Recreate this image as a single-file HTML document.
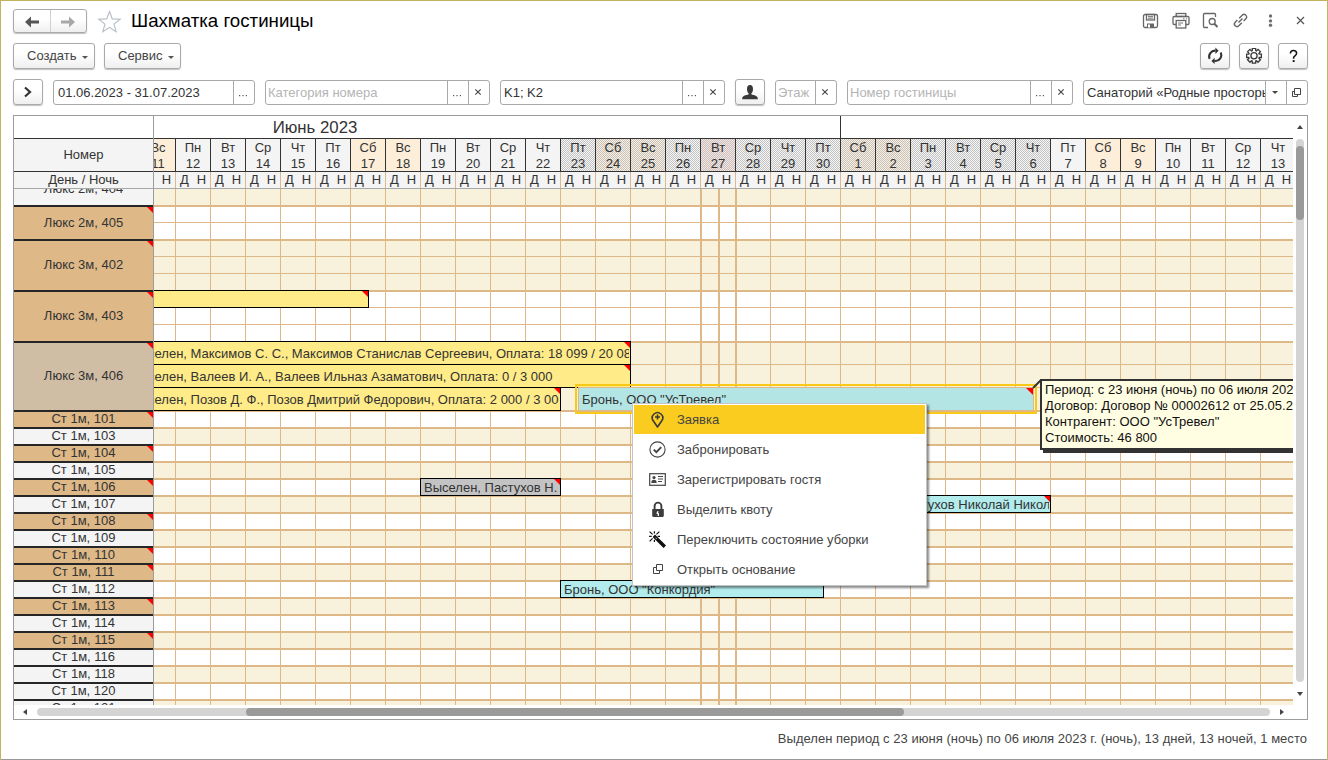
<!DOCTYPE html><html><head><meta charset="utf-8"><title>Шахматка гостиницы</title><style>
*{box-sizing:border-box;margin:0;padding:0}
html,body{width:1328px;height:760px;overflow:hidden;background:#fff;font-family:"Liberation Sans",sans-serif;font-size:13px;color:#333;position:relative}
.a{position:absolute}
.btn{position:absolute;border:1px solid #a9a9a9;border-radius:3px;background:linear-gradient(#fff 40%,#efefef);box-shadow:0 1px 1px rgba(0,0,0,.25)}
.fld{position:absolute;border:1px solid #a9a9a9;border-radius:3px;background:#fff;height:25px}
.sep{position:absolute;top:0;bottom:0;width:1px;background:#a9a9a9}
.t{position:absolute;white-space:nowrap;line-height:16px}
.ph{color:#b4b4b4}
.dots{position:absolute;font-size:11px;color:#444}
.x{position:absolute}
.hl{position:absolute;height:1px;background:#deb887}
.vl{position:absolute;width:1px;background:#deb887}
.chk{background-image:repeating-conic-gradient(#c2c2c2 0 25%,#f6f6f6 0 50%);background-size:2px 2px}
.chkw{background-image:repeating-conic-gradient(#c2c2c2 0 25%,#fdefd9 0 50%);background-size:2px 2px}
.chkt{background-image:repeating-conic-gradient(#c2c2c2 0 25%,#fde3de 0 50%);background-size:2px 2px}
.chkb{background-image:repeating-conic-gradient(#c2c2c2 0 25%,#deb887 0 50%);background-size:2px 2px}
.bar{position:absolute;border:1px solid #000;overflow:hidden;white-space:nowrap;line-height:16px}
.tri{position:absolute;width:0;height:0;border-top:6px solid #f00;border-left:6px solid transparent}
.mi{position:absolute;left:0;width:292px;height:30px}
.mi .t{left:44px;top:7px;color:#444}
</style></head><body>
<div class="a" style="left:0;top:0;width:1328px;height:1px;background:#c3b35e"></div>
<div class="a" style="left:0;top:0;width:1px;height:760px;background:#c3b35e"></div>
<div class="a" style="left:1327px;top:0;width:1px;height:760px;background:#c3b35e"></div>
<div class="a" style="left:1px;top:759px;width:1326px;height:1px;background:#999"></div>
<div class="btn" style="left:13px;top:9px;width:74px;height:24px"><div class="sep" style="left:36px;background:#d0d0d0"></div><svg class="a" style="left:10px;top:6px" width="16" height="12" viewBox="0 0 16 12"><path d="M1 6 L7 0.5 V4.6 H15 V7.4 H7 V11.5 Z" fill="#555"/></svg><svg class="a" style="left:46px;top:6px" width="16" height="12" viewBox="0 0 16 12"><path d="M15 6 L9 0.5 V4.6 H1 V7.4 H9 V11.5 Z" fill="#a8a8a8"/></svg></div>
<svg class="a" style="left:97px;top:10px" width="25" height="24" viewBox="0 0 25 24"><path d="M12.5 1.5 L15.3 8.9 L23.2 9.2 L17 14.1 L19.2 21.7 L12.5 17.4 L5.8 21.7 L8 14.1 L1.8 9.2 L9.7 8.9 Z" fill="none" stroke="#b5bcc4" stroke-width="1.1" stroke-linejoin="miter"/></svg>
<div class="t" style="left:131px;top:10px;font-size:18.7px;line-height:22px;color:#000">Шахматка гостиницы</div>
<svg class="a" style="left:1142px;top:13px" width="17" height="16" viewBox="0 0 17 16" fill="none" stroke="#666" stroke-width="1.3">
<rect x="1.5" y="1.5" width="14" height="13" rx="1.5"/><rect x="4.5" y="1.5" width="8" height="5.5"/><path d="M6 3.6 H11 M6 5.2 H11" stroke-width="0.9"/>
<rect x="5" y="10.5" width="7" height="4" fill="#666" stroke="none"/><rect x="6" y="11.5" width="2" height="3" fill="#fff" stroke="none"/></svg>
<svg class="a" style="left:1172px;top:12px" width="18" height="17" viewBox="0 0 18 17" fill="none" stroke="#666" stroke-width="1.3">
<rect x="4.2" y="1.5" width="9.6" height="3"/><path d="M4 12.5 H2.2 Q1 12.5 1 11.3 V5.7 Q1 4.5 2.2 4.5 H15.8 Q17 4.5 17 5.7 V11.3 Q17 12.5 15.8 12.5 H14"/>
<rect x="4.2" y="8.5" width="9.6" height="7.5" fill="#fff"/><path d="M6 11 H11 M6 13 H9 M11 6.8 H12.5 M14 6.8 H15" stroke-width="0.9"/></svg>
<svg class="a" style="left:1202px;top:12px" width="18" height="17" viewBox="0 0 18 17" fill="none" stroke="#666" stroke-width="1.3">
<path d="M6 15.5 H2.5 Q1.5 15.5 1.5 14.5 V2.5 Q1.5 1.5 2.5 1.5 H12.5 Q13.5 1.5 13.5 2.5 V5"/><circle cx="10.2" cy="9.5" r="3"/><path d="M12.3 11.8 L15.5 15" stroke-width="2"/></svg>
<svg class="a" style="left:1232px;top:12px" width="17" height="17" viewBox="0 0 17 17" fill="none" stroke="#666" stroke-width="1.4">
<path d="M7.2 6.2 L10.2 3.2 Q12 1.4 13.8 3.2 Q15.6 5 13.8 6.8 L11.6 9"/><path d="M9.8 10.8 L6.8 13.8 Q5 15.6 3.2 13.8 Q1.4 12 3.2 10.2 L5.4 8"/><path d="M6.5 10.5 L10.5 6.5"/></svg>
<svg class="a" style="left:1267px;top:12px" width="7" height="17" viewBox="0 0 7 17"><circle cx="3.5" cy="4" r="1.7" fill="#707070"/><circle cx="3.5" cy="8.9" r="1.7" fill="#707070"/><circle cx="3.5" cy="13.2" r="1.7" fill="#707070"/></svg>
<svg class="a" style="left:1295px;top:15px" width="11" height="11" viewBox="0 0 11 11"><path d="M2 2 L9 9 M9 2 L2 9" stroke="#555" stroke-width="1.2"/></svg>
<div class="btn" style="left:13px;top:43px;width:82px;height:26px"><div class="t" style="left:13px;top:4px;color:#444">Создать</div><div class="a" style="left:68px;top:12px;border-top:3px solid #555;border-left:3px solid transparent;border-right:3px solid transparent"></div></div>
<div class="btn" style="left:104px;top:43px;width:77px;height:26px"><div class="t" style="left:13px;top:4px;color:#444">Сервис</div><div class="a" style="left:63px;top:12px;border-top:3px solid #555;border-left:3px solid transparent;border-right:3px solid transparent"></div></div>
<div class="btn" style="left:1200px;top:43px;width:30px;height:26px"><svg class="a" style="left:6px;top:3px" width="16" height="18" viewBox="-1 -1 16 18" fill="none" stroke="#333" stroke-width="2.1">
<path d="M1.6 10.8 A5.9 5.9 0 0 1 7.6 2.7"/><path d="M12.6 4.4 A5.9 5.9 0 0 1 6.4 12.9"/><path d="M7.4 -0.4 L10.6 2.7 L7.4 5.9 Z M6.6 9.8 L3.4 12.9 L6.6 16 Z" fill="#333" stroke="none"/></svg></div>
<div class="btn" style="left:1239px;top:43px;width:30px;height:26px"><svg class="a" style="left:6px;top:4px" width="17" height="17" viewBox="0 0 17 17" fill="none" stroke="#3a3a3a" stroke-width="1.3">
<path d="M6.30 2.57 L6.30 0.40 L9.70 0.40 L9.70 2.57 L10.50 2.90 L12.03 1.37 L14.43 3.77 L12.90 5.30 L13.23 6.10 L15.40 6.10 L15.40 9.50 L13.23 9.50 L12.90 10.30 L14.43 11.83 L12.03 14.23 L10.50 12.70 L9.70 13.03 L9.70 15.20 L6.30 15.20 L6.30 13.03 L5.50 12.70 L3.97 14.23 L1.57 11.83 L3.10 10.30 L2.77 9.50 L0.60 9.50 L0.60 6.10 L2.77 6.10 L3.10 5.30 L1.57 3.77 L3.97 1.37 L5.50 2.90 Z" stroke-linejoin="miter"/><circle cx="8.0" cy="7.8" r="3.1"/></svg></div>
<div class="btn" style="left:1278px;top:43px;width:30px;height:26px"><svg class="a" style="left:9px;top:5px" width="11" height="14" viewBox="0 0 11 14"><path d="M2.4 4.6 C2.4 2.6 3.6 1.5 5.5 1.5 C7.4 1.5 8.6 2.7 8.6 4.3 C8.6 6.3 6.4 6.8 5.6 8.3 V9.8" fill="none" stroke="#111" stroke-width="1.5"/><rect x="4.7" y="11.1" width="1.9" height="1.9" fill="#111"/></svg></div>
<div class="btn" style="left:13px;top:79px;width:30px;height:26px"><svg class="a" style="left:9px;top:6px" width="10" height="12" viewBox="0 0 10 12"><path d="M2 1.5 L7 6 L2 10.5" fill="none" stroke="#333" stroke-width="2.2"/></svg></div>
<div class="fld" style="left:53px;top:80px;width:202px"><div class="t " style="left:4px;top:4px">01.06.2023 - 31.07.2023</div><div class="sep" style="left:179px"></div><svg class="a" style="left:184px;top:13px" width="10" height="3" viewBox="0 0 10 3"><rect x="1" y="1" width="1.2" height="1.2" fill="#555"/><rect x="4.4" y="1" width="1.2" height="1.2" fill="#555"/><rect x="7.8" y="1" width="1.2" height="1.2" fill="#555"/></svg></div>
<div class="fld" style="left:265px;top:80px;width:225px"><div class="t ph" style="left:2px;top:4px">Категория номера</div><div class="sep" style="left:202px"></div><svg class="a" style="left:208px;top:7px" width="8" height="8" viewBox="0 0 8 8"><path d="M1.3 1.3 L6.7 6.7 M6.7 1.3 L1.3 6.7" stroke="#444" stroke-width="1.1"/></svg><div class="sep" style="left:181px"></div><svg class="a" style="left:186px;top:13px" width="10" height="3" viewBox="0 0 10 3"><rect x="1" y="1" width="1.2" height="1.2" fill="#555"/><rect x="4.4" y="1" width="1.2" height="1.2" fill="#555"/><rect x="7.8" y="1" width="1.2" height="1.2" fill="#555"/></svg></div>
<div class="fld" style="left:500px;top:80px;width:225px"><div class="t " style="left:3px;top:4px">K1; K2</div><div class="sep" style="left:202px"></div><svg class="a" style="left:208px;top:7px" width="8" height="8" viewBox="0 0 8 8"><path d="M1.3 1.3 L6.7 6.7 M6.7 1.3 L1.3 6.7" stroke="#444" stroke-width="1.1"/></svg><div class="sep" style="left:181px"></div><svg class="a" style="left:186px;top:13px" width="10" height="3" viewBox="0 0 10 3"><rect x="1" y="1" width="1.2" height="1.2" fill="#555"/><rect x="4.4" y="1" width="1.2" height="1.2" fill="#555"/><rect x="7.8" y="1" width="1.2" height="1.2" fill="#555"/></svg></div>
<div class="btn" style="left:735px;top:79px;width:30px;height:26px"><svg class="a" style="left:6px;top:5px" width="18" height="15" viewBox="0 0 18 15"><path d="M8 0 C5.6 0 5 2 5 4.2 C5 6.2 5.8 7.6 6.6 8.3 V9.3 C6.6 9.9 0.2 10.3 0.2 13.2 V14.2 H15.8 V13.2 C15.8 10.3 9.4 9.9 9.4 9.3 V8.3 C10.2 7.6 11 6.2 11 4.2 C11 2 10.4 0 8 0 Z" fill="#3a3a3a"/></svg></div>
<div class="fld" style="left:775px;top:80px;width:62px"><div class="t ph" style="left:2px;top:4px">Этаж</div><div class="sep" style="left:39px"></div><svg class="a" style="left:45px;top:7px" width="8" height="8" viewBox="0 0 8 8"><path d="M1.3 1.3 L6.7 6.7 M6.7 1.3 L1.3 6.7" stroke="#444" stroke-width="1.1"/></svg></div>
<div class="fld" style="left:847px;top:80px;width:226px"><div class="t ph" style="left:2px;top:4px">Номер гостиницы</div><div class="sep" style="left:203px"></div><svg class="a" style="left:209px;top:7px" width="8" height="8" viewBox="0 0 8 8"><path d="M1.3 1.3 L6.7 6.7 M6.7 1.3 L1.3 6.7" stroke="#444" stroke-width="1.1"/></svg><div class="sep" style="left:182px"></div><svg class="a" style="left:187px;top:13px" width="10" height="3" viewBox="0 0 10 3"><rect x="1" y="1" width="1.2" height="1.2" fill="#555"/><rect x="4.4" y="1" width="1.2" height="1.2" fill="#555"/><rect x="7.8" y="1" width="1.2" height="1.2" fill="#555"/></svg></div>
<div class="fld" style="left:1083px;top:80px;width:225px;overflow:hidden"><div class="t" style="left:3px;top:4px;width:178px;overflow:hidden">Санаторий «Родные просторы»</div><div class="sep" style="left:181px"></div><div class="a" style="left:188px;top:10px;border-top:3px solid #444;border-left:3px solid transparent;border-right:3px solid transparent"></div><div class="sep" style="left:202px"></div><svg class="a" style="left:207px;top:6px" width="11" height="11" viewBox="0 0 11 11" fill="none" stroke="#444" stroke-width="1"><path d="M3.5 1.5 H9.5 V7.5 H3.5 Z"/><path d="M3.5 4.5 H1.5 V9.5 H6.5 V7.5"/></svg></div>
<div class="a" style="left:13px;top:115px;width:1295px;height:605px;border:1px solid #9c9c9c"></div>
<div class="a" style="left:14px;top:139px;width:139px;height:49px;background:#f4f4f4"></div>
<div class="a" style="left:14px;top:138px;width:1279px;height:1px;background:#333"></div>
<div class="a" style="left:14px;top:171px;width:1279px;height:1px;background:#333"></div>
<div class="t" style="left:14px;top:147px;width:139px;text-align:center">Номер</div>
<div class="t" style="left:14px;top:172px;width:139px;text-align:center">День / Ночь</div>
<div class="a" style="left:153px;top:116px;width:1px;height:589px;background:#9c9c9c"></div>
<div class="a" style="left:154px;top:116px;width:1139px;height:72px;overflow:hidden">
<div class="t" style="left:61px;top:3px;width:200px;text-align:center;font-size:16.8px;line-height:18px">Июнь 2023</div>
<div class="a" style="left:686px;top:0;width:1px;height:22px;background:#333"></div>
<div class="a " style="left:-13px;top:23px;width:34px;height:32px;background:#fdeed9;"></div>
<div class="t" style="left:-14px;top:24px;width:36px;text-align:center">Вс<br>11</div>
<div class="a" style="left:-14px;top:22px;width:1px;height:34px;background:#333"></div>
<div class="a" style="left:-13px;top:56px;width:34px;height:16px;background:#f4f4f4"></div>
<div class="t" style="left:-13px;top:56px;width:17px;text-align:center">Д</div>
<div class="t" style="left:4px;top:56px;width:17px;text-align:center">Н</div>
<div class="a" style="left:-14px;top:56px;width:1px;height:16px;background:#deb887"></div>
<div class="a " style="left:22px;top:23px;width:34px;height:32px;background:#f4f4f4;"></div>
<div class="t" style="left:21px;top:24px;width:36px;text-align:center">Пн<br>12</div>
<div class="a" style="left:21px;top:22px;width:1px;height:34px;background:#333"></div>
<div class="a" style="left:22px;top:56px;width:34px;height:16px;background:#f4f4f4"></div>
<div class="t" style="left:22px;top:56px;width:17px;text-align:center">Д</div>
<div class="t" style="left:39px;top:56px;width:17px;text-align:center">Н</div>
<div class="a" style="left:21px;top:56px;width:1px;height:16px;background:#deb887"></div>
<div class="a " style="left:57px;top:23px;width:34px;height:32px;background:#f4f4f4;"></div>
<div class="t" style="left:56px;top:24px;width:36px;text-align:center">Вт<br>13</div>
<div class="a" style="left:56px;top:22px;width:1px;height:34px;background:#333"></div>
<div class="a" style="left:57px;top:56px;width:34px;height:16px;background:#f4f4f4"></div>
<div class="t" style="left:57px;top:56px;width:17px;text-align:center">Д</div>
<div class="t" style="left:74px;top:56px;width:17px;text-align:center">Н</div>
<div class="a" style="left:56px;top:56px;width:1px;height:16px;background:#deb887"></div>
<div class="a " style="left:92px;top:23px;width:34px;height:32px;background:#f4f4f4;"></div>
<div class="t" style="left:91px;top:24px;width:36px;text-align:center">Ср<br>14</div>
<div class="a" style="left:91px;top:22px;width:1px;height:34px;background:#333"></div>
<div class="a" style="left:92px;top:56px;width:34px;height:16px;background:#f4f4f4"></div>
<div class="t" style="left:92px;top:56px;width:17px;text-align:center">Д</div>
<div class="t" style="left:109px;top:56px;width:17px;text-align:center">Н</div>
<div class="a" style="left:91px;top:56px;width:1px;height:16px;background:#deb887"></div>
<div class="a " style="left:127px;top:23px;width:34px;height:32px;background:#f4f4f4;"></div>
<div class="t" style="left:126px;top:24px;width:36px;text-align:center">Чт<br>15</div>
<div class="a" style="left:126px;top:22px;width:1px;height:34px;background:#333"></div>
<div class="a" style="left:127px;top:56px;width:34px;height:16px;background:#f4f4f4"></div>
<div class="t" style="left:127px;top:56px;width:17px;text-align:center">Д</div>
<div class="t" style="left:144px;top:56px;width:17px;text-align:center">Н</div>
<div class="a" style="left:126px;top:56px;width:1px;height:16px;background:#deb887"></div>
<div class="a " style="left:162px;top:23px;width:34px;height:32px;background:#f4f4f4;"></div>
<div class="t" style="left:161px;top:24px;width:36px;text-align:center">Пт<br>16</div>
<div class="a" style="left:161px;top:22px;width:1px;height:34px;background:#333"></div>
<div class="a" style="left:162px;top:56px;width:34px;height:16px;background:#f4f4f4"></div>
<div class="t" style="left:162px;top:56px;width:17px;text-align:center">Д</div>
<div class="t" style="left:179px;top:56px;width:17px;text-align:center">Н</div>
<div class="a" style="left:161px;top:56px;width:1px;height:16px;background:#deb887"></div>
<div class="a " style="left:197px;top:23px;width:34px;height:32px;background:#fdeed9;"></div>
<div class="t" style="left:196px;top:24px;width:36px;text-align:center">Сб<br>17</div>
<div class="a" style="left:196px;top:22px;width:1px;height:34px;background:#333"></div>
<div class="a" style="left:197px;top:56px;width:34px;height:16px;background:#f4f4f4"></div>
<div class="t" style="left:197px;top:56px;width:17px;text-align:center">Д</div>
<div class="t" style="left:214px;top:56px;width:17px;text-align:center">Н</div>
<div class="a" style="left:196px;top:56px;width:1px;height:16px;background:#deb887"></div>
<div class="a " style="left:232px;top:23px;width:34px;height:32px;background:#fdeed9;"></div>
<div class="t" style="left:231px;top:24px;width:36px;text-align:center">Вс<br>18</div>
<div class="a" style="left:231px;top:22px;width:1px;height:34px;background:#333"></div>
<div class="a" style="left:232px;top:56px;width:34px;height:16px;background:#f4f4f4"></div>
<div class="t" style="left:232px;top:56px;width:17px;text-align:center">Д</div>
<div class="t" style="left:249px;top:56px;width:17px;text-align:center">Н</div>
<div class="a" style="left:231px;top:56px;width:1px;height:16px;background:#deb887"></div>
<div class="a " style="left:267px;top:23px;width:34px;height:32px;background:#f4f4f4;"></div>
<div class="t" style="left:266px;top:24px;width:36px;text-align:center">Пн<br>19</div>
<div class="a" style="left:266px;top:22px;width:1px;height:34px;background:#333"></div>
<div class="a" style="left:267px;top:56px;width:34px;height:16px;background:#f4f4f4"></div>
<div class="t" style="left:267px;top:56px;width:17px;text-align:center">Д</div>
<div class="t" style="left:284px;top:56px;width:17px;text-align:center">Н</div>
<div class="a" style="left:266px;top:56px;width:1px;height:16px;background:#deb887"></div>
<div class="a " style="left:302px;top:23px;width:34px;height:32px;background:#f4f4f4;"></div>
<div class="t" style="left:301px;top:24px;width:36px;text-align:center">Вт<br>20</div>
<div class="a" style="left:301px;top:22px;width:1px;height:34px;background:#333"></div>
<div class="a" style="left:302px;top:56px;width:34px;height:16px;background:#f4f4f4"></div>
<div class="t" style="left:302px;top:56px;width:17px;text-align:center">Д</div>
<div class="t" style="left:319px;top:56px;width:17px;text-align:center">Н</div>
<div class="a" style="left:301px;top:56px;width:1px;height:16px;background:#deb887"></div>
<div class="a " style="left:337px;top:23px;width:34px;height:32px;background:#f4f4f4;"></div>
<div class="t" style="left:336px;top:24px;width:36px;text-align:center">Ср<br>21</div>
<div class="a" style="left:336px;top:22px;width:1px;height:34px;background:#333"></div>
<div class="a" style="left:337px;top:56px;width:34px;height:16px;background:#f4f4f4"></div>
<div class="t" style="left:337px;top:56px;width:17px;text-align:center">Д</div>
<div class="t" style="left:354px;top:56px;width:17px;text-align:center">Н</div>
<div class="a" style="left:336px;top:56px;width:1px;height:16px;background:#deb887"></div>
<div class="a " style="left:372px;top:23px;width:34px;height:32px;background:#f4f4f4;"></div>
<div class="t" style="left:371px;top:24px;width:36px;text-align:center">Чт<br>22</div>
<div class="a" style="left:371px;top:22px;width:1px;height:34px;background:#333"></div>
<div class="a" style="left:372px;top:56px;width:34px;height:16px;background:#f4f4f4"></div>
<div class="t" style="left:372px;top:56px;width:17px;text-align:center">Д</div>
<div class="t" style="left:389px;top:56px;width:17px;text-align:center">Н</div>
<div class="a" style="left:371px;top:56px;width:1px;height:16px;background:#deb887"></div>
<div class="a chk" style="left:407px;top:23px;width:34px;height:32px;"></div>
<div class="t" style="left:406px;top:24px;width:36px;text-align:center">Пт<br>23</div>
<div class="a" style="left:406px;top:22px;width:1px;height:34px;background:#333"></div>
<div class="a" style="left:407px;top:56px;width:34px;height:16px;background:#f4f4f4"></div>
<div class="t" style="left:407px;top:56px;width:17px;text-align:center">Д</div>
<div class="t" style="left:424px;top:56px;width:17px;text-align:center">Н</div>
<div class="a" style="left:406px;top:56px;width:1px;height:16px;background:#deb887"></div>
<div class="a chkw" style="left:442px;top:23px;width:34px;height:32px;"></div>
<div class="t" style="left:441px;top:24px;width:36px;text-align:center">Сб<br>24</div>
<div class="a" style="left:441px;top:22px;width:1px;height:34px;background:#333"></div>
<div class="a" style="left:442px;top:56px;width:34px;height:16px;background:#f4f4f4"></div>
<div class="t" style="left:442px;top:56px;width:17px;text-align:center">Д</div>
<div class="t" style="left:459px;top:56px;width:17px;text-align:center">Н</div>
<div class="a" style="left:441px;top:56px;width:1px;height:16px;background:#deb887"></div>
<div class="a chkw" style="left:477px;top:23px;width:34px;height:32px;"></div>
<div class="t" style="left:476px;top:24px;width:36px;text-align:center">Вс<br>25</div>
<div class="a" style="left:476px;top:22px;width:1px;height:34px;background:#333"></div>
<div class="a" style="left:477px;top:56px;width:34px;height:16px;background:#f4f4f4"></div>
<div class="t" style="left:477px;top:56px;width:17px;text-align:center">Д</div>
<div class="t" style="left:494px;top:56px;width:17px;text-align:center">Н</div>
<div class="a" style="left:476px;top:56px;width:1px;height:16px;background:#deb887"></div>
<div class="a chk" style="left:512px;top:23px;width:34px;height:32px;"></div>
<div class="t" style="left:511px;top:24px;width:36px;text-align:center">Пн<br>26</div>
<div class="a" style="left:511px;top:22px;width:1px;height:34px;background:#333"></div>
<div class="a" style="left:512px;top:56px;width:34px;height:16px;background:#f4f4f4"></div>
<div class="t" style="left:512px;top:56px;width:17px;text-align:center">Д</div>
<div class="t" style="left:529px;top:56px;width:17px;text-align:center">Н</div>
<div class="a" style="left:511px;top:56px;width:1px;height:16px;background:#deb887"></div>
<div class="a chkt" style="left:547px;top:23px;width:34px;height:32px;"></div>
<div class="t" style="left:546px;top:24px;width:36px;text-align:center">Вт<br>27</div>
<div class="a" style="left:546px;top:22px;width:1px;height:34px;background:#333"></div>
<div class="a" style="left:547px;top:56px;width:34px;height:16px;background:#f4f4f4"></div>
<div class="t" style="left:547px;top:56px;width:17px;text-align:center">Д</div>
<div class="t" style="left:564px;top:56px;width:17px;text-align:center">Н</div>
<div class="a" style="left:546px;top:56px;width:1px;height:16px;background:#deb887"></div>
<div class="a chk" style="left:582px;top:23px;width:34px;height:32px;"></div>
<div class="t" style="left:581px;top:24px;width:36px;text-align:center">Ср<br>28</div>
<div class="a" style="left:581px;top:22px;width:1px;height:34px;background:#333"></div>
<div class="a" style="left:582px;top:56px;width:34px;height:16px;background:#f4f4f4"></div>
<div class="t" style="left:582px;top:56px;width:17px;text-align:center">Д</div>
<div class="t" style="left:599px;top:56px;width:17px;text-align:center">Н</div>
<div class="a" style="left:581px;top:56px;width:1px;height:16px;background:#deb887"></div>
<div class="a chk" style="left:617px;top:23px;width:34px;height:32px;"></div>
<div class="t" style="left:616px;top:24px;width:36px;text-align:center">Чт<br>29</div>
<div class="a" style="left:616px;top:22px;width:1px;height:34px;background:#333"></div>
<div class="a" style="left:617px;top:56px;width:34px;height:16px;background:#f4f4f4"></div>
<div class="t" style="left:617px;top:56px;width:17px;text-align:center">Д</div>
<div class="t" style="left:634px;top:56px;width:17px;text-align:center">Н</div>
<div class="a" style="left:616px;top:56px;width:1px;height:16px;background:#deb887"></div>
<div class="a chk" style="left:652px;top:23px;width:34px;height:32px;"></div>
<div class="t" style="left:651px;top:24px;width:36px;text-align:center">Пт<br>30</div>
<div class="a" style="left:651px;top:22px;width:1px;height:34px;background:#333"></div>
<div class="a" style="left:652px;top:56px;width:34px;height:16px;background:#f4f4f4"></div>
<div class="t" style="left:652px;top:56px;width:17px;text-align:center">Д</div>
<div class="t" style="left:669px;top:56px;width:17px;text-align:center">Н</div>
<div class="a" style="left:651px;top:56px;width:1px;height:16px;background:#deb887"></div>
<div class="a chkw" style="left:687px;top:23px;width:34px;height:32px;"></div>
<div class="t" style="left:686px;top:24px;width:36px;text-align:center">Сб<br>1</div>
<div class="a" style="left:686px;top:22px;width:1px;height:34px;background:#333"></div>
<div class="a" style="left:687px;top:56px;width:34px;height:16px;background:#f4f4f4"></div>
<div class="t" style="left:687px;top:56px;width:17px;text-align:center">Д</div>
<div class="t" style="left:704px;top:56px;width:17px;text-align:center">Н</div>
<div class="a" style="left:686px;top:56px;width:1px;height:16px;background:#deb887"></div>
<div class="a chkw" style="left:722px;top:23px;width:34px;height:32px;"></div>
<div class="t" style="left:721px;top:24px;width:36px;text-align:center">Вс<br>2</div>
<div class="a" style="left:721px;top:22px;width:1px;height:34px;background:#333"></div>
<div class="a" style="left:722px;top:56px;width:34px;height:16px;background:#f4f4f4"></div>
<div class="t" style="left:722px;top:56px;width:17px;text-align:center">Д</div>
<div class="t" style="left:739px;top:56px;width:17px;text-align:center">Н</div>
<div class="a" style="left:721px;top:56px;width:1px;height:16px;background:#deb887"></div>
<div class="a chk" style="left:757px;top:23px;width:34px;height:32px;"></div>
<div class="t" style="left:756px;top:24px;width:36px;text-align:center">Пн<br>3</div>
<div class="a" style="left:756px;top:22px;width:1px;height:34px;background:#333"></div>
<div class="a" style="left:757px;top:56px;width:34px;height:16px;background:#f4f4f4"></div>
<div class="t" style="left:757px;top:56px;width:17px;text-align:center">Д</div>
<div class="t" style="left:774px;top:56px;width:17px;text-align:center">Н</div>
<div class="a" style="left:756px;top:56px;width:1px;height:16px;background:#deb887"></div>
<div class="a chk" style="left:792px;top:23px;width:34px;height:32px;"></div>
<div class="t" style="left:791px;top:24px;width:36px;text-align:center">Вт<br>4</div>
<div class="a" style="left:791px;top:22px;width:1px;height:34px;background:#333"></div>
<div class="a" style="left:792px;top:56px;width:34px;height:16px;background:#f4f4f4"></div>
<div class="t" style="left:792px;top:56px;width:17px;text-align:center">Д</div>
<div class="t" style="left:809px;top:56px;width:17px;text-align:center">Н</div>
<div class="a" style="left:791px;top:56px;width:1px;height:16px;background:#deb887"></div>
<div class="a chk" style="left:827px;top:23px;width:34px;height:32px;"></div>
<div class="t" style="left:826px;top:24px;width:36px;text-align:center">Ср<br>5</div>
<div class="a" style="left:826px;top:22px;width:1px;height:34px;background:#333"></div>
<div class="a" style="left:827px;top:56px;width:34px;height:16px;background:#f4f4f4"></div>
<div class="t" style="left:827px;top:56px;width:17px;text-align:center">Д</div>
<div class="t" style="left:844px;top:56px;width:17px;text-align:center">Н</div>
<div class="a" style="left:826px;top:56px;width:1px;height:16px;background:#deb887"></div>
<div class="a chk" style="left:862px;top:23px;width:34px;height:32px;"></div>
<div class="t" style="left:861px;top:24px;width:36px;text-align:center">Чт<br>6</div>
<div class="a" style="left:861px;top:22px;width:1px;height:34px;background:#333"></div>
<div class="a" style="left:862px;top:56px;width:34px;height:16px;background:#f4f4f4"></div>
<div class="t" style="left:862px;top:56px;width:17px;text-align:center">Д</div>
<div class="t" style="left:879px;top:56px;width:17px;text-align:center">Н</div>
<div class="a" style="left:861px;top:56px;width:1px;height:16px;background:#deb887"></div>
<div class="a " style="left:897px;top:23px;width:34px;height:32px;background:#f4f4f4;"></div>
<div class="t" style="left:896px;top:24px;width:36px;text-align:center">Пт<br>7</div>
<div class="a" style="left:896px;top:22px;width:1px;height:34px;background:#333"></div>
<div class="a" style="left:897px;top:56px;width:34px;height:16px;background:#f4f4f4"></div>
<div class="t" style="left:897px;top:56px;width:17px;text-align:center">Д</div>
<div class="t" style="left:914px;top:56px;width:17px;text-align:center">Н</div>
<div class="a" style="left:896px;top:56px;width:1px;height:16px;background:#deb887"></div>
<div class="a " style="left:932px;top:23px;width:34px;height:32px;background:#fdeed9;"></div>
<div class="t" style="left:931px;top:24px;width:36px;text-align:center">Сб<br>8</div>
<div class="a" style="left:931px;top:22px;width:1px;height:34px;background:#333"></div>
<div class="a" style="left:932px;top:56px;width:34px;height:16px;background:#f4f4f4"></div>
<div class="t" style="left:932px;top:56px;width:17px;text-align:center">Д</div>
<div class="t" style="left:949px;top:56px;width:17px;text-align:center">Н</div>
<div class="a" style="left:931px;top:56px;width:1px;height:16px;background:#deb887"></div>
<div class="a " style="left:967px;top:23px;width:34px;height:32px;background:#fdeed9;"></div>
<div class="t" style="left:966px;top:24px;width:36px;text-align:center">Вс<br>9</div>
<div class="a" style="left:966px;top:22px;width:1px;height:34px;background:#333"></div>
<div class="a" style="left:967px;top:56px;width:34px;height:16px;background:#f4f4f4"></div>
<div class="t" style="left:967px;top:56px;width:17px;text-align:center">Д</div>
<div class="t" style="left:984px;top:56px;width:17px;text-align:center">Н</div>
<div class="a" style="left:966px;top:56px;width:1px;height:16px;background:#deb887"></div>
<div class="a " style="left:1002px;top:23px;width:34px;height:32px;background:#f4f4f4;"></div>
<div class="t" style="left:1001px;top:24px;width:36px;text-align:center">Пн<br>10</div>
<div class="a" style="left:1001px;top:22px;width:1px;height:34px;background:#333"></div>
<div class="a" style="left:1002px;top:56px;width:34px;height:16px;background:#f4f4f4"></div>
<div class="t" style="left:1002px;top:56px;width:17px;text-align:center">Д</div>
<div class="t" style="left:1019px;top:56px;width:17px;text-align:center">Н</div>
<div class="a" style="left:1001px;top:56px;width:1px;height:16px;background:#deb887"></div>
<div class="a " style="left:1037px;top:23px;width:34px;height:32px;background:#f4f4f4;"></div>
<div class="t" style="left:1036px;top:24px;width:36px;text-align:center">Вт<br>11</div>
<div class="a" style="left:1036px;top:22px;width:1px;height:34px;background:#333"></div>
<div class="a" style="left:1037px;top:56px;width:34px;height:16px;background:#f4f4f4"></div>
<div class="t" style="left:1037px;top:56px;width:17px;text-align:center">Д</div>
<div class="t" style="left:1054px;top:56px;width:17px;text-align:center">Н</div>
<div class="a" style="left:1036px;top:56px;width:1px;height:16px;background:#deb887"></div>
<div class="a " style="left:1072px;top:23px;width:34px;height:32px;background:#f4f4f4;"></div>
<div class="t" style="left:1071px;top:24px;width:36px;text-align:center">Ср<br>12</div>
<div class="a" style="left:1071px;top:22px;width:1px;height:34px;background:#333"></div>
<div class="a" style="left:1072px;top:56px;width:34px;height:16px;background:#f4f4f4"></div>
<div class="t" style="left:1072px;top:56px;width:17px;text-align:center">Д</div>
<div class="t" style="left:1089px;top:56px;width:17px;text-align:center">Н</div>
<div class="a" style="left:1071px;top:56px;width:1px;height:16px;background:#deb887"></div>
<div class="a " style="left:1107px;top:23px;width:34px;height:32px;background:#f4f4f4;"></div>
<div class="t" style="left:1106px;top:24px;width:36px;text-align:center">Чт<br>13</div>
<div class="a" style="left:1106px;top:22px;width:1px;height:34px;background:#333"></div>
<div class="a" style="left:1107px;top:56px;width:34px;height:16px;background:#f4f4f4"></div>
<div class="t" style="left:1107px;top:56px;width:17px;text-align:center">Д</div>
<div class="t" style="left:1124px;top:56px;width:17px;text-align:center">Н</div>
<div class="a" style="left:1106px;top:56px;width:1px;height:16px;background:#deb887"></div>
</div>
<div class="a" style="left:14px;top:188px;width:1279px;height:1px;background:#a8a8a8"></div>
<div class="a" style="left:14px;top:189px;width:139px;height:516px;overflow:hidden">
<div class="a " style="left:0;top:-18px;width:139px;height:34px;background:#f4f4f4;"></div>
<div class="a" style="left:0;top:-18px;width:139px;height:2px;background:#262626"></div>
<div class="t" style="left:0;top:-8px;width:139px;text-align:center">Люкс 2м, 404</div>
<div class="a " style="left:0;top:16px;width:139px;height:34px;background:#deb887;"></div>
<div class="a" style="left:0;top:16px;width:139px;height:2px;background:#262626"></div>
<div class="tri" style="left:133px;top:18px"></div>
<div class="t" style="left:0;top:26px;width:139px;text-align:center">Люкс 2м, 405</div>
<div class="a " style="left:0;top:50px;width:139px;height:51px;background:#deb887;"></div>
<div class="a" style="left:0;top:50px;width:139px;height:2px;background:#262626"></div>
<div class="tri" style="left:133px;top:52px"></div>
<div class="t" style="left:0;top:68px;width:139px;text-align:center">Люкс 3м, 402</div>
<div class="a " style="left:0;top:101px;width:139px;height:51px;background:#deb887;"></div>
<div class="a" style="left:0;top:101px;width:139px;height:2px;background:#262626"></div>
<div class="tri" style="left:133px;top:103px"></div>
<div class="t" style="left:0;top:119px;width:139px;text-align:center">Люкс 3м, 403</div>
<div class="a chkb" style="left:0;top:152px;width:139px;height:69px;"></div>
<div class="a" style="left:0;top:152px;width:139px;height:2px;background:#262626"></div>
<div class="tri" style="left:133px;top:154px"></div>
<div class="t" style="left:0;top:179px;width:139px;text-align:center">Люкс 3м, 406</div>
<div class="a " style="left:0;top:221px;width:139px;height:17px;background:#deb887;"></div>
<div class="a" style="left:0;top:221px;width:139px;height:2px;background:#262626"></div>
<div class="tri" style="left:133px;top:223px"></div>
<div class="t" style="left:0;top:222px;width:139px;text-align:center">Ст 1м, 101</div>
<div class="a " style="left:0;top:238px;width:139px;height:17px;background:#f4f4f4;"></div>
<div class="a" style="left:0;top:238px;width:139px;height:2px;background:#262626"></div>
<div class="t" style="left:0;top:239px;width:139px;text-align:center">Ст 1м, 103</div>
<div class="a " style="left:0;top:255px;width:139px;height:17px;background:#deb887;"></div>
<div class="a" style="left:0;top:255px;width:139px;height:2px;background:#262626"></div>
<div class="tri" style="left:133px;top:257px"></div>
<div class="t" style="left:0;top:256px;width:139px;text-align:center">Ст 1м, 104</div>
<div class="a " style="left:0;top:272px;width:139px;height:17px;background:#f4f4f4;"></div>
<div class="a" style="left:0;top:272px;width:139px;height:2px;background:#262626"></div>
<div class="t" style="left:0;top:273px;width:139px;text-align:center">Ст 1м, 105</div>
<div class="a " style="left:0;top:289px;width:139px;height:17px;background:#deb887;"></div>
<div class="a" style="left:0;top:289px;width:139px;height:2px;background:#262626"></div>
<div class="tri" style="left:133px;top:291px"></div>
<div class="t" style="left:0;top:290px;width:139px;text-align:center">Ст 1м, 106</div>
<div class="a " style="left:0;top:306px;width:139px;height:17px;background:#f4f4f4;"></div>
<div class="a" style="left:0;top:306px;width:139px;height:2px;background:#262626"></div>
<div class="t" style="left:0;top:307px;width:139px;text-align:center">Ст 1м, 107</div>
<div class="a " style="left:0;top:323px;width:139px;height:17px;background:#deb887;"></div>
<div class="a" style="left:0;top:323px;width:139px;height:2px;background:#262626"></div>
<div class="tri" style="left:133px;top:325px"></div>
<div class="t" style="left:0;top:324px;width:139px;text-align:center">Ст 1м, 108</div>
<div class="a " style="left:0;top:340px;width:139px;height:17px;background:#f4f4f4;"></div>
<div class="a" style="left:0;top:340px;width:139px;height:2px;background:#262626"></div>
<div class="t" style="left:0;top:341px;width:139px;text-align:center">Ст 1м, 109</div>
<div class="a " style="left:0;top:357px;width:139px;height:17px;background:#deb887;"></div>
<div class="a" style="left:0;top:357px;width:139px;height:2px;background:#262626"></div>
<div class="tri" style="left:133px;top:359px"></div>
<div class="t" style="left:0;top:358px;width:139px;text-align:center">Ст 1м, 110</div>
<div class="a " style="left:0;top:374px;width:139px;height:17px;background:#deb887;"></div>
<div class="a" style="left:0;top:374px;width:139px;height:2px;background:#262626"></div>
<div class="tri" style="left:133px;top:376px"></div>
<div class="t" style="left:0;top:375px;width:139px;text-align:center">Ст 1м, 111</div>
<div class="a " style="left:0;top:391px;width:139px;height:17px;background:#f4f4f4;"></div>
<div class="a" style="left:0;top:391px;width:139px;height:2px;background:#262626"></div>
<div class="t" style="left:0;top:392px;width:139px;text-align:center">Ст 1м, 112</div>
<div class="a " style="left:0;top:408px;width:139px;height:17px;background:#deb887;"></div>
<div class="a" style="left:0;top:408px;width:139px;height:2px;background:#262626"></div>
<div class="tri" style="left:133px;top:410px"></div>
<div class="t" style="left:0;top:409px;width:139px;text-align:center">Ст 1м, 113</div>
<div class="a " style="left:0;top:425px;width:139px;height:17px;background:#f4f4f4;"></div>
<div class="a" style="left:0;top:425px;width:139px;height:2px;background:#262626"></div>
<div class="t" style="left:0;top:426px;width:139px;text-align:center">Ст 1м, 114</div>
<div class="a " style="left:0;top:442px;width:139px;height:17px;background:#deb887;"></div>
<div class="a" style="left:0;top:442px;width:139px;height:2px;background:#262626"></div>
<div class="tri" style="left:133px;top:444px"></div>
<div class="t" style="left:0;top:443px;width:139px;text-align:center">Ст 1м, 115</div>
<div class="a " style="left:0;top:459px;width:139px;height:17px;background:#f4f4f4;"></div>
<div class="a" style="left:0;top:459px;width:139px;height:2px;background:#262626"></div>
<div class="t" style="left:0;top:460px;width:139px;text-align:center">Ст 1м, 116</div>
<div class="a " style="left:0;top:476px;width:139px;height:17px;background:#f4f4f4;"></div>
<div class="a" style="left:0;top:476px;width:139px;height:2px;background:#262626"></div>
<div class="t" style="left:0;top:477px;width:139px;text-align:center">Ст 1м, 118</div>
<div class="a " style="left:0;top:493px;width:139px;height:17px;background:#f4f4f4;"></div>
<div class="a" style="left:0;top:493px;width:139px;height:2px;background:#262626"></div>
<div class="t" style="left:0;top:494px;width:139px;text-align:center">Ст 1м, 120</div>
<div class="a " style="left:0;top:510px;width:139px;height:17px;background:#f4f4f4;"></div>
<div class="a" style="left:0;top:510px;width:139px;height:2px;background:#262626"></div>
<div class="t" style="left:0;top:511px;width:139px;text-align:center">Ст 1м, 121</div>
</div>
<div class="a" style="left:154px;top:189px;width:1139px;height:516px;overflow:hidden">
<div class="a" style="left:0;top:-18px;width:1139px;height:34px;background:#f8f2dc"></div>
<div class="a" style="left:0;top:16px;width:1139px;height:34px;background:#fff"></div>
<div class="a" style="left:0;top:50px;width:1139px;height:51px;background:#f8f2dc"></div>
<div class="a" style="left:0;top:101px;width:1139px;height:51px;background:#fff"></div>
<div class="a" style="left:0;top:152px;width:1139px;height:69px;background:#f8f2dc"></div>
<div class="a" style="left:0;top:221px;width:1139px;height:17px;background:#fff"></div>
<div class="a" style="left:0;top:238px;width:1139px;height:17px;background:#f8f2dc"></div>
<div class="a" style="left:0;top:255px;width:1139px;height:17px;background:#fff"></div>
<div class="a" style="left:0;top:272px;width:1139px;height:17px;background:#f8f2dc"></div>
<div class="a" style="left:0;top:289px;width:1139px;height:17px;background:#fff"></div>
<div class="a" style="left:0;top:306px;width:1139px;height:17px;background:#f8f2dc"></div>
<div class="a" style="left:0;top:323px;width:1139px;height:17px;background:#fff"></div>
<div class="a" style="left:0;top:340px;width:1139px;height:17px;background:#f8f2dc"></div>
<div class="a" style="left:0;top:357px;width:1139px;height:17px;background:#fff"></div>
<div class="a" style="left:0;top:374px;width:1139px;height:17px;background:#f8f2dc"></div>
<div class="a" style="left:0;top:391px;width:1139px;height:17px;background:#fff"></div>
<div class="a" style="left:0;top:408px;width:1139px;height:17px;background:#f8f2dc"></div>
<div class="a" style="left:0;top:425px;width:1139px;height:17px;background:#fff"></div>
<div class="a" style="left:0;top:442px;width:1139px;height:17px;background:#f8f2dc"></div>
<div class="a" style="left:0;top:459px;width:1139px;height:17px;background:#fff"></div>
<div class="a" style="left:0;top:476px;width:1139px;height:17px;background:#f8f2dc"></div>
<div class="a" style="left:0;top:493px;width:1139px;height:17px;background:#fff"></div>
<div class="a" style="left:0;top:510px;width:1139px;height:17px;background:#f8f2dc"></div>
<div class="vl" style="left:21px;top:0;height:516px"></div>
<div class="vl" style="left:56px;top:0;height:516px"></div>
<div class="vl" style="left:91px;top:0;height:516px"></div>
<div class="vl" style="left:126px;top:0;height:516px"></div>
<div class="vl" style="left:161px;top:0;height:516px"></div>
<div class="vl" style="left:196px;top:0;height:516px"></div>
<div class="vl" style="left:231px;top:0;height:516px"></div>
<div class="vl" style="left:266px;top:0;height:516px"></div>
<div class="vl" style="left:301px;top:0;height:516px"></div>
<div class="vl" style="left:336px;top:0;height:516px"></div>
<div class="vl" style="left:371px;top:0;height:516px"></div>
<div class="vl" style="left:406px;top:0;height:516px"></div>
<div class="vl" style="left:441px;top:0;height:516px"></div>
<div class="vl" style="left:476px;top:0;height:516px"></div>
<div class="vl" style="left:511px;top:0;height:516px"></div>
<div class="vl" style="left:546px;top:0;height:516px"></div>
<div class="vl" style="left:581px;top:0;height:516px"></div>
<div class="vl" style="left:616px;top:0;height:516px"></div>
<div class="vl" style="left:651px;top:0;height:516px"></div>
<div class="vl" style="left:686px;top:0;height:516px"></div>
<div class="vl" style="left:721px;top:0;height:516px"></div>
<div class="vl" style="left:756px;top:0;height:516px"></div>
<div class="vl" style="left:791px;top:0;height:516px"></div>
<div class="vl" style="left:826px;top:0;height:516px"></div>
<div class="vl" style="left:861px;top:0;height:516px"></div>
<div class="vl" style="left:896px;top:0;height:516px"></div>
<div class="vl" style="left:931px;top:0;height:516px"></div>
<div class="vl" style="left:966px;top:0;height:516px"></div>
<div class="vl" style="left:1001px;top:0;height:516px"></div>
<div class="vl" style="left:1036px;top:0;height:516px"></div>
<div class="vl" style="left:1071px;top:0;height:516px"></div>
<div class="vl" style="left:1106px;top:0;height:516px"></div>
<div class="vl" style="left:546px;top:0;height:516px;width:2px"></div>
<div class="vl" style="left:564px;top:0;height:516px;width:2px"></div>
<div class="vl" style="left:581px;top:0;height:516px;width:2px"></div>
<div class="hl" style="left:0;top:-18px;width:1139px;height:2px"></div>
<div class="hl" style="left:0;top:-1px;width:1139px"></div>
<div class="hl" style="left:0;top:16px;width:1139px;height:2px"></div>
<div class="hl" style="left:0;top:33px;width:1139px"></div>
<div class="hl" style="left:0;top:50px;width:1139px;height:2px"></div>
<div class="hl" style="left:0;top:67px;width:1139px"></div>
<div class="hl" style="left:0;top:84px;width:1139px"></div>
<div class="hl" style="left:0;top:101px;width:1139px;height:2px"></div>
<div class="hl" style="left:0;top:118px;width:1139px"></div>
<div class="hl" style="left:0;top:135px;width:1139px"></div>
<div class="hl" style="left:0;top:152px;width:1139px;height:2px"></div>
<div class="hl" style="left:0;top:175px;width:1139px"></div>
<div class="hl" style="left:0;top:198px;width:1139px"></div>
<div class="hl" style="left:0;top:221px;width:1139px;height:2px"></div>
<div class="hl" style="left:0;top:238px;width:1139px;height:2px"></div>
<div class="hl" style="left:0;top:255px;width:1139px;height:2px"></div>
<div class="hl" style="left:0;top:272px;width:1139px;height:2px"></div>
<div class="hl" style="left:0;top:289px;width:1139px;height:2px"></div>
<div class="hl" style="left:0;top:306px;width:1139px;height:2px"></div>
<div class="hl" style="left:0;top:323px;width:1139px;height:2px"></div>
<div class="hl" style="left:0;top:340px;width:1139px;height:2px"></div>
<div class="hl" style="left:0;top:357px;width:1139px;height:2px"></div>
<div class="hl" style="left:0;top:374px;width:1139px;height:2px"></div>
<div class="hl" style="left:0;top:391px;width:1139px;height:2px"></div>
<div class="hl" style="left:0;top:408px;width:1139px;height:2px"></div>
<div class="hl" style="left:0;top:425px;width:1139px;height:2px"></div>
<div class="hl" style="left:0;top:442px;width:1139px;height:2px"></div>
<div class="hl" style="left:0;top:459px;width:1139px;height:2px"></div>
<div class="hl" style="left:0;top:476px;width:1139px;height:2px"></div>
<div class="hl" style="left:0;top:493px;width:1139px;height:2px"></div>
<div class="hl" style="left:0;top:510px;width:1139px;height:2px"></div>
<div class="bar" style="left:-14px;top:101px;width:229px;height:18px;background:#ffeb88;border-left:none;"><div class="tri" style="right:0;top:0"></div></div>
<div class="bar" style="left:-14px;top:152px;width:491px;height:24px;background:#ffeb88;border-left:none;"><div class="t" style="left:-10px;top:4px;width:499px;overflow:hidden;">Выселен, Максимов С. С., Максимов Станислав Сергеевич, Оплата: 18 099 / 20 084</div><div class="tri" style="right:0;top:0"></div></div>
<div class="bar" style="left:-14px;top:175px;width:491px;height:24px;background:#ffeb88;border-left:none;"><div class="t" style="left:-10px;top:4px;width:499px;overflow:hidden;">Выселен, Валеев И. А., Валеев Ильназ Азаматович, Оплата: 0 / 3 000</div><div class="tri" style="right:0;top:0"></div></div>
<div class="bar" style="left:-14px;top:198px;width:421px;height:24px;background:#ffeb88;border-left:none;"><div class="t" style="left:-10px;top:4px;width:429px;overflow:hidden;">Выселен, Позов Д. Ф., Позов Дмитрий Федорович, Оплата: 2 000 / 3 000</div><div class="tri" style="right:0;top:0"></div></div>
<div class="bar" style="left:266px;top:289px;width:141px;height:18px;background:#c3c3c3;"><div class="t" style="left:3px;top:1px;">Выселен, Пастухов Н.</div><div class="tri" style="right:0;top:0"></div></div>
<div class="bar" style="left:666px;top:306px;width:231px;height:18px;background:#b2ecec;"><div class="t" style="left:17px;top:1px;width:211px;overflow:hidden;">Выселен, Пастухов Николай Николаевич</div><div class="tri" style="right:0;top:0"></div></div>
<div class="bar" style="left:406px;top:391px;width:264px;height:18px;background:#b2ecec;"><div class="t" style="left:3px;top:1px;">Бронь, ООО "Конкордия"</div></div>
<div class="a" style="left:421px;top:195px;width:462px;height:30px;border:2px solid #f9c918"></div>
<div class="a" style="left:424px;top:198px;width:456px;height:24px;background:#b4e5e5;border:1px solid #deb887;overflow:hidden"><div class="t" style="left:3px;top:4px">Бронь, ООО "УсТревел"</div><div class="tri" style="right:0;top:0;border-top-width:7px;border-left-width:7px"></div></div>
<div class="a" style="left:889px;top:193px;width:270px;height:71px;background:#333"></div>
<div class="a" style="left:886px;top:190px;width:270px;height:71px;background:#fffde2;border:2px solid #333">
<div class="t" style="left:3px;top:1px;color:#111;line-height:16px">Период: с 23 июня (ночь) по 06 июля 2023 г. (ночь)<br>Договор: Договор № 00002612 от 25.05.2023<br>Контрагент: ООО "УсТревел"<br>Стоимость: 46 800</div></div>
<svg class="a" style="left:878px;top:190px" width="10" height="10" viewBox="0 0 10 10"><path d="M1 9 L8.5 1.5" stroke="#333" stroke-width="2"/></svg>
</div>
<div class="a" style="left:632px;top:403px;width:295px;height:183px;background:#fff;border:1px solid #c4c4c4;box-shadow:2px 2px 2px rgba(0,0,0,.45)">
<div class="a" style="left:1px;top:1px;width:291px;height:29px;background:#f9cc1f"></div>
<div class="t" style="left:44px;top:8px;color:#444">Заявка</div>
<div class="t" style="left:44px;top:38px;color:#444">Забронировать</div>
<div class="t" style="left:44px;top:68px;color:#444">Зарегистрировать гостя</div>
<div class="t" style="left:44px;top:98px;color:#444">Выделить квоту</div>
<div class="t" style="left:44px;top:128px;color:#444">Переключить состояние уборки</div>
<div class="t" style="left:44px;top:158px;color:#444">Открыть основание</div>
<svg class="a" style="left:18px;top:7px" width="13" height="17" viewBox="0 0 13 17"><path d="M6.5 16 L2.2 9.8 A5.2 5.2 0 1 1 10.8 9.8 Z" fill="none" stroke="#3a3a3a" stroke-width="1.6" stroke-linejoin="round"/><path d="M6.5 3.5 V8.5 M4 6 H9" stroke="#3a3a3a" stroke-width="1.6"/></svg>
<svg class="a" style="left:16px;top:37px" width="17" height="17" viewBox="0 0 17 17"><circle cx="8.5" cy="8.5" r="7.6" fill="none" stroke="#444" stroke-width="1.1"/><path d="M4.8 8.6 L7.4 11.2 L12.2 6.2" fill="none" stroke="#444" stroke-width="1.9"/></svg>
<svg class="a" style="left:16px;top:69px" width="17" height="13" viewBox="0 0 17 13"><rect x="0.7" y="0.7" width="15.6" height="11.6" fill="none" stroke="#444" stroke-width="1.2"/><circle cx="5" cy="4.5" r="1.6" fill="#444"/><path d="M2.3 10 Q2.3 6.8 5 6.8 Q7.7 6.8 7.7 10 Z" fill="#444"/><path d="M9 3.5 H14 M9 6 H14 M9 8.5 H13" stroke="#444" stroke-width="1"/></svg>
<svg class="a" style="left:19px;top:97px" width="12" height="17" viewBox="0 0 12 17"><path d="M2.6 8.5 V5 A3.4 3.4 0 0 1 9.4 5 V8.5" fill="none" stroke="#3c3c3c" stroke-width="1.9"/><path d="M0.2 8 H11.8 V14.5 Q11.8 16 10.3 16 H1.7 Q0.2 16 0.2 14.5 Z" fill="#3c3c3c"/><path d="M6 10.2 L5.2 12.2 L6.3 12.6 V15" stroke="#fff" stroke-width="1.3" fill="none"/></svg>
<svg class="a" style="left:16px;top:127px" width="17" height="17" viewBox="0 0 17 17"><path d="M6 6 L14.6 14.6" stroke="#111" stroke-width="3.4" stroke-linecap="square"/><path d="M6.6 6.8 L7.6 7.8" stroke="#fff" stroke-width="1"/><path d="M5.4 0.2 V2.6 M5.4 8.8 V11 M0.1 5.4 H2.7 M8.6 5.4 H11 M0.6 0.6 L3.6 3.4 M10.4 0.6 L7.4 3.4 M0.6 10.4 L3.6 7.4" stroke="#111" stroke-width="1.2"/></svg>
<svg class="a" style="left:20px;top:160px" width="11" height="10" viewBox="0 0 11 10" fill="none" stroke="#444" stroke-width="1"><path d="M3.5 0.5 H9.5 V6.5 H3.5 Z"/><path d="M3.5 3.5 H0.5 V9.5 H6.5 V6.5"/></svg>
</div>
<div class="a" style="left:1297px;top:125px;border-bottom:4px solid #444;border-left:3px solid transparent;border-right:3px solid transparent"></div>
<div class="a" style="left:1296px;top:139px;width:8px;height:543px;border-radius:4px;background:#d4d4d4"></div>
<div class="a" style="left:1296px;top:146px;width:8px;height:74px;border-radius:4px;background:#9a9a9a"></div>
<div class="a" style="left:1297px;top:692px;border-top:4px solid #444;border-left:3px solid transparent;border-right:3px solid transparent"></div>
<div class="a" style="left:23px;top:709px;border-right:4px solid #444;border-top:3px solid transparent;border-bottom:3px solid transparent"></div>
<div class="a" style="left:37px;top:708px;width:1233px;height:8px;border-radius:4px;background:#d4d4d4"></div>
<div class="a" style="left:246px;top:708px;width:658px;height:8px;border-radius:4px;background:#9a9a9a"></div>
<div class="a" style="left:1280px;top:709px;border-left:4px solid #444;border-top:3px solid transparent;border-bottom:3px solid transparent"></div>
<div class="t" style="left:0;top:731px;width:1307px;text-align:right;color:#444;letter-spacing:0.025px">Выделен период с 23 июня (ночь) по 06 июля 2023 г. (ночь), 13 дней, 13 ночей, 1 место</div>
</body></html>
